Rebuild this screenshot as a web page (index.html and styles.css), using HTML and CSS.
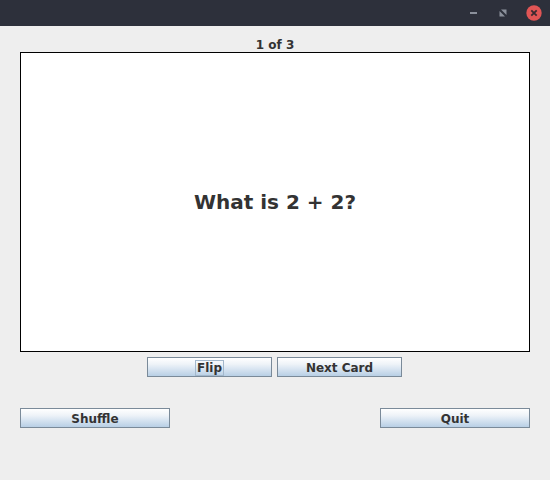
FILE: index.html
```html
<!DOCTYPE html>
<html>
<head>
<meta charset="utf-8">
<link rel="stylesheet" href="styles.css">
</head>
<body>
<div class="titlebar">
  <svg class="tb-icon min" width="12" height="12" viewBox="0 0 12 12"><rect x="3" y="5" width="7" height="2" fill="#8b909b"/></svg>
  <svg class="tb-icon max" width="12" height="12" viewBox="0 0 12 12"><path d="M4 2.5 L9.5 2.5 L9.5 8 Z" fill="#8b909b"/><path d="M2.5 4 L2.5 9.5 L8 9.5 Z" fill="#8b909b"/></svg>
  <svg class="tb-icon close" width="18" height="18" viewBox="0 0 18 18"><circle cx="9" cy="9" r="7.7" fill="#e05555"/><path d="M6.3 6.3 L11.7 11.7 M11.7 6.3 L6.3 11.7" stroke="#3a2a30" stroke-width="1.8"/></svg>
</div>
<div class="main">
  <div class="counter">1 of 3</div>
  <div class="card"><span>What is 2 + 2?</span></div>
  <div class="row-center">
    <button class="btn mid"><span class="focus">Flip</span></button>
    <button class="btn mid"><span class="lbl">Next Card</span></button>
  </div>
  <div class="row-split">
    <button class="btn wide"><span class="lbl">Shuffle</span></button>
    <button class="btn wide"><span class="lbl">Quit</span></button>
  </div>
</div>
</body>
</html>
```
FILE: styles.css
```css
html, body { margin: 0; padding: 0; }
body {
  width: 550px; height: 480px;
  background: #eeeeee;
  font-family: "DejaVu Sans", sans-serif;
  overflow: hidden;
}
.titlebar {
  height: 26px;
  background: #2d303b;
  display: flex;
  align-items: center;
  justify-content: flex-end;
  padding-right: 7px;
}
.tb-icon { display: block; }
.max { margin-left: 18px; }
.close { margin-left: 16px; }
.main { padding: 0 20px; }
.counter {
  height: 26px;
  line-height: 12px;
  padding-top: 13px;
  box-sizing: border-box;
  text-align: center;
  font-weight: bold;
  font-size: 12px;
  color: #333333;
}
.card {
  height: 298px;
  border: 1px solid #000000;
  background: #ffffff;
  display: flex;
  align-items: center;
  justify-content: center;
  font-weight: bold;
  font-size: 20px;
  color: #333333;
}
.row-center {
  display: flex;
  justify-content: flex-start;
  gap: 5px;
  margin-top: 5px;
  padding-left: 127px;
}
.row-split {
  display: flex;
  justify-content: space-between;
  margin-top: 31px;
}
.btn {
  height: 20px;
  border: 1px solid #7a8a99;
  background: linear-gradient(to bottom, #ffffff 0%, #eef3f8 35%, #dde8f3 55%, #b8cfe5 100%);
  font-family: "DejaVu Sans", sans-serif;
  font-weight: bold;
  font-size: 12px;
  color: #333333;
  padding: 1px 0 0 0;
  display: flex;
  align-items: center;
  justify-content: center;
}
.mid { width: 125px; }
.wide { width: 150px; }
.lbl { line-height: 14px; }
.focus {
  border: 1px solid #a3b8cc;
  padding: 0 1px;
  line-height: 14px;
}
```
